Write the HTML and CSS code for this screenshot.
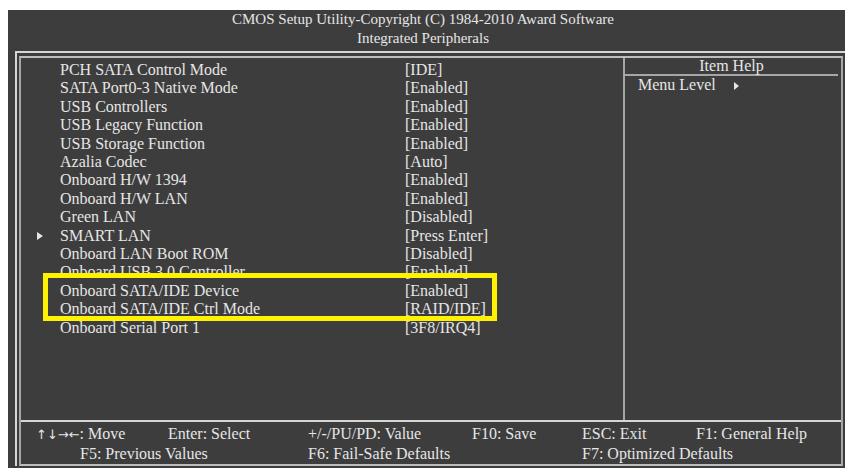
FILE: index.html
```html
<!DOCTYPE html>
<html lang="en">
<head>
    <meta charset="UTF-8">
    <title>Integrated Peripherals</title>
    <link rel="stylesheet" href="styles.css">
</head>
<body>
    <div class="screen">
        <!-- title -->
        <div class="title">
            <div>CMOS Setup Utility-Copyright (C) 1984-2010 Award Software</div>
            <div>Integrated Peripherals</div>
        </div>

        <div class="frame">
            <div class="inner">
                <div class="main">
                    <div class="items">
                        <div class="row"><span class="label">PCH SATA Control Mode</span><span class="value">[IDE]</span></div>
                        <div class="row"><span class="label">SATA Port0-3 Native Mode</span><span class="value">[Enabled]</span></div>
                        <div class="row"><span class="label">USB Controllers</span><span class="value">[Enabled]</span></div>
                        <div class="row"><span class="label">USB Legacy Function</span><span class="value">[Enabled]</span></div>
                        <div class="row"><span class="label">USB Storage Function</span><span class="value">[Enabled]</span></div>
                        <div class="row"><span class="label">Azalia Codec</span><span class="value">[Auto]</span></div>
                        <div class="row"><span class="label">Onboard H/W 1394</span><span class="value">[Enabled]</span></div>
                        <div class="row"><span class="label">Onboard H/W LAN</span><span class="value">[Enabled]</span></div>
                        <div class="row"><span class="label">Green LAN</span><span class="value">[Disabled]</span></div>
                        <div class="row sub"><span class="label">SMART LAN</span><span class="value">[Press Enter]</span></div>
                        <div class="row"><span class="label">Onboard LAN Boot ROM</span><span class="value">[Disabled]</span></div>
                        <div class="row"><span class="label">Onboard USB 3.0 Controller</span><span class="value">[Enabled]</span></div>
                        <div class="row"><span class="label">Onboard SATA/IDE Device</span><span class="value">[Enabled]</span></div>
                        <div class="row"><span class="label">Onboard SATA/IDE Ctrl Mode</span><span class="value">[RAID/IDE]</span></div>
                        <div class="row"><span class="label">Onboard Serial Port 1</span><span class="value">[3F8/IRQ4]</span></div>
                        <!-- callout over the two SATA rows -->
                        <div class="highlight"></div>
                    </div>
                    <div class="help">
                        <div class="help-title">Item Help</div>
                        <div class="help-line">Menu Level <span class="arrow"></span></div>
                    </div>
                </div>
                <div class="keys">
                    <div class="keys-row first">
                        <span><span class="arrows">&uarr;&darr;&rarr;&larr;</span>: Move</span>
                        <span>Enter: Select</span>
                        <span>+/-/PU/PD: Value</span>
                        <span>F10: Save</span>
                        <span>ESC: Exit</span>
                        <span>F1: General Help</span>
                    </div>
                    <div class="keys-row second">
                        <span>F5: Previous Values</span>
                        <span>F6: Fail-Safe Defaults</span>
                        <span>F7: Optimized Defaults</span>
                    </div>
                </div>
            </div>
        </div>
    </div>
</body>
</html>
```

FILE: styles.css
```css
body {
    margin: 0;
    padding: 0;
    background-color: #fff;
    overflow: hidden;
    font-family: "Liberation Serif", "Times New Roman", serif;
}
.screen {
    margin: 10px 0 0 8px;
    width: 850px;
    height: 470px;
    background-color: #3d3d3d;
    color: #e6e6e6;
    padding-left: 7px;
    box-sizing: border-box;
}
.title {
    height: 41px;
    margin-left: -7px;
    width: 830px;
    text-align: center;
    font-size: 15px;
    line-height: 19px;
}
/* double frame */
.frame {
    border-top: 2px solid #d6d6d6;
    border-left: 2px solid #d6d6d6;
    padding: 3px 0 0 2px;
}
.inner {
    width: 824px;
    height: 410px;
    border: 2px solid #bdbdbd;
    border-left-color: #a6a6a6;
    border-right-color: #a6a6a6;
    box-sizing: border-box;
    display: flex;
    flex-direction: column;
}
.main {
    height: 362px;
    display: flex;
    border-bottom: 2px solid #d6d6d6;
}
.items {
    position: relative;
    width: 602px;
    border-right: 2px solid #a6a6a6;
    padding-top: 3px;
    font-size: 16px;
    line-height: 18.4px;
}
.row {
    display: flex;
    padding-left: 39px;
    position: relative;
}
.label {
    width: 345px;
}
.sub::before {
    content: "";
    position: absolute;
    left: 16px;
    top: 5px;
    border-left: 6px solid #e6e6e6;
    border-top: 4px solid transparent;
    border-bottom: 4px solid transparent;
}
.highlight {
    position: absolute;
    left: 22px;
    top: 215px;
    width: 454px;
    height: 48px;
    border: 5px solid #fff200;
    box-sizing: border-box;
}
.help {
    flex: 1;
    font-size: 16px;
}
.help-title {
    text-align: center;
    line-height: 16px;
    margin-right: 3px;
    border-bottom: 2px solid #a6a6a6;
}
.help-line {
    padding-left: 13px;
    line-height: 17px;
}
.arrow {
    display: inline-block;
    margin-left: 14px;
    border-left: 5px solid #e6e6e6;
    border-top: 4px solid transparent;
    border-bottom: 4px solid transparent;
}
.keys {
    flex: 1;
    font-size: 16px;
    line-height: 19px;
    padding-top: 2px;
}
.keys-row {
    display: grid;
}
.keys-row.first {
    padding-left: 15px;
    grid-template-columns: 132px 140px 164px 110px 114px 1fr;
}
.keys-row.second {
    padding-left: 59px;
    grid-template-columns: 228px 274px 1fr;
}
.arrows {
    font-family: "DejaVu Sans", sans-serif;
    font-size: 13px;
}
```
